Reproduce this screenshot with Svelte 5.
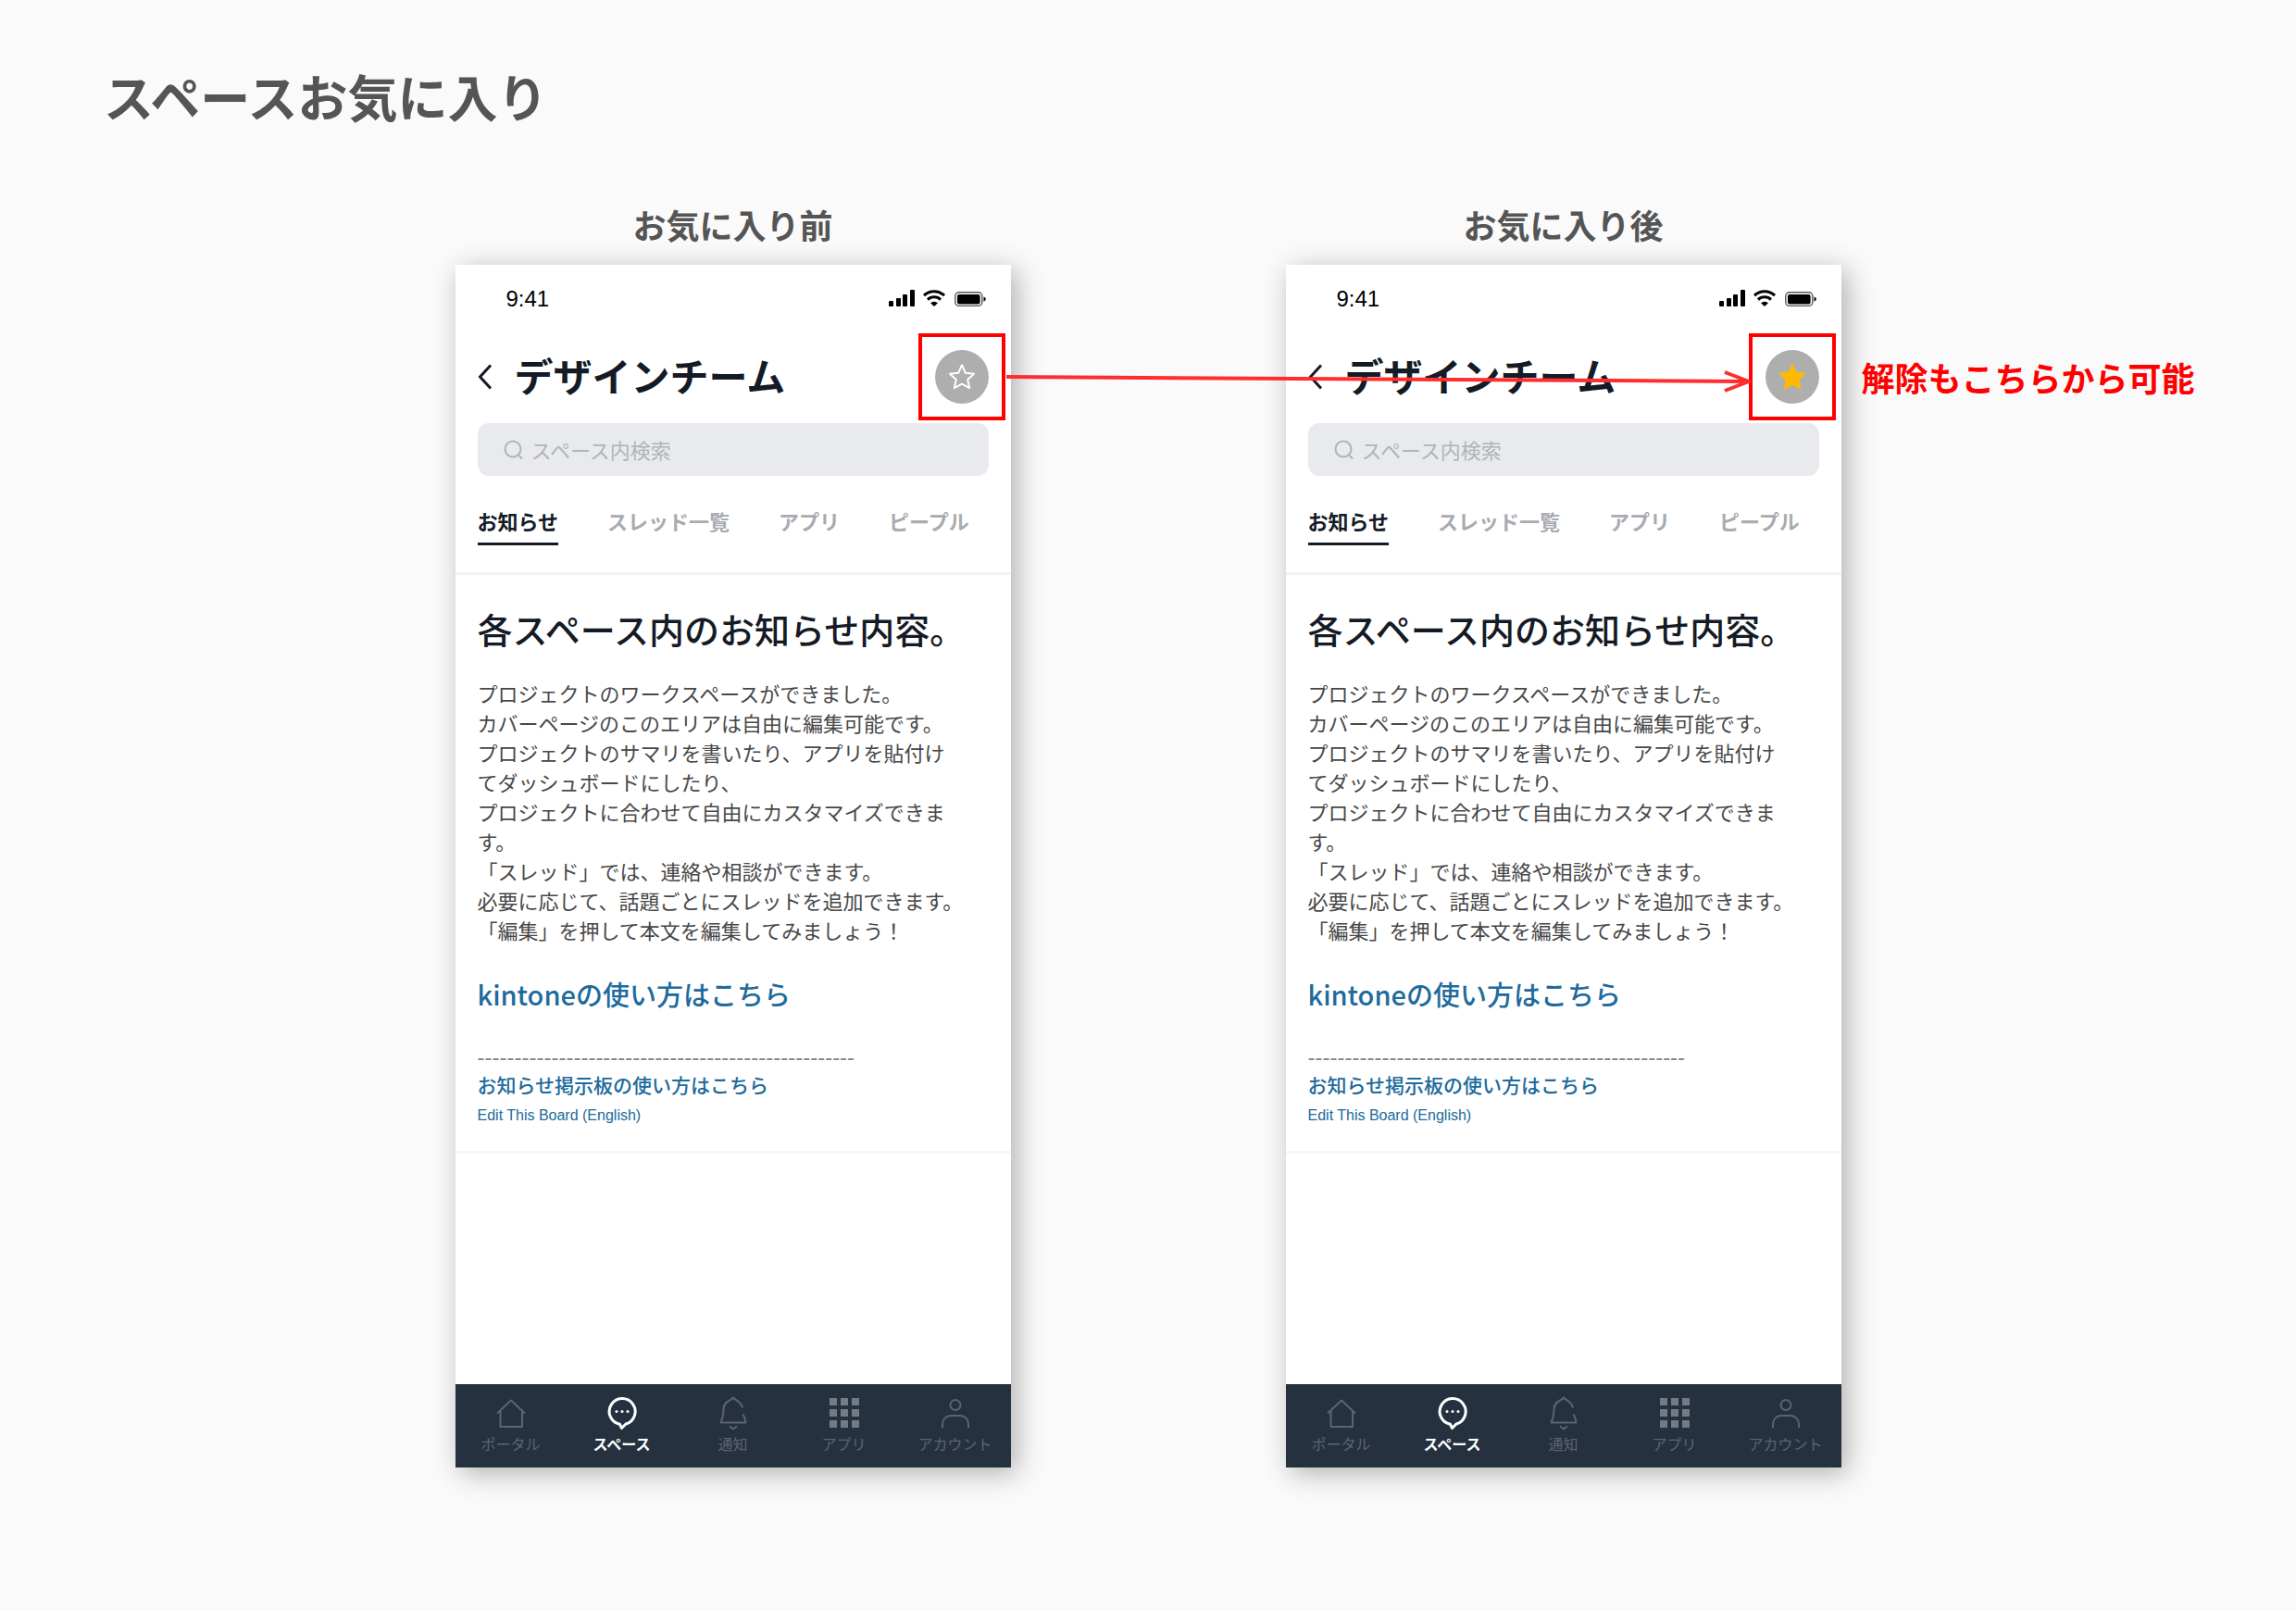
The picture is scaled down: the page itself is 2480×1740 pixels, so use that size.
<script>
  const phones = [
    { id: 'before', caption: 'お気に入り前', favorite: false },
    { id: 'after', caption: 'お気に入り後', favorite: true }
  ];
  const tabs = ['お知らせ', 'スレッド一覧', 'アプリ', 'ピープル'];
  const body = [
    'プロジェクトのワークスペースができました。',
    'カバーページのこのエリアは自由に編集可能です。',
    'プロジェクトのサマリを書いたり、アプリを貼付け',
    'てダッシュボードにしたり、',
    'プロジェクトに合わせて自由にカスタマイズできま',
    'す。',
    '「スレッド」では、連絡や相談ができます。',
    '必要に応じて、話題ごとにスレッドを追加できます。',
    '「編集」を押して本文を編集してみましょう！'
  ];
  const nav = [
    { icon: 'home', label: 'ポータル' },
    { icon: 'space', label: 'スペース', current: true },
    { icon: 'bell', label: '通知' },
    { icon: 'grid', label: 'アプリ' },
    { icon: 'user', label: 'アカウント' }
  ];
  const rule = '-'.repeat(51);
  const cells = [0, 12, 24];
</script>

<main>
  <h1>スペースお気に入り</h1>

  <div class="stage">
    <div class="pair">
      {#each phones as phone (phone.id)}
        <figure>
          <figcaption>{phone.caption}</figcaption>
          <article class="phone">
            <div class="status">
              <time>9:41</time>
              <svg width="106" height="20" viewBox="0 0 106 20" aria-hidden="true">
                <rect x="0" y="12" width="5" height="6" rx="1" />
                <rect x="8" y="9" width="5" height="9" rx="1" />
                <rect x="15" y="5" width="5" height="13" rx="1" />
                <rect x="23" y="0" width="5" height="18" rx="1" />
                <g fill="none" stroke="#000" stroke-width="3">
                  <path d="M38 6.2a16 16 0 0 1 22 0" />
                  <path d="M42 10.6a10 10 0 0 1 14 0" />
                </g>
                <path d="M45 14.2a6 6 0 0 1 8 0l-4 3.8z" />
                <rect x="71.8" y="2.8" width="29" height="14.6" rx="4" fill="none" stroke="#555" stroke-width="1.4" />
                <rect x="74" y="5" width="24.600" height="10.400" rx="2" />
                <path d="M102.500 7.500q2.400 0.800 2.400 2.600t-2.400 2.600z" />
              </svg>
            </div>

            <header>
              <button class="back" aria-label="戻る">
                <svg width="16" height="28" viewBox="0 0 16 28" aria-hidden="true"><path d="M14 1.500 2.500 14 14 26.500" /></svg>
              </button>
              <h2>デザインチーム</h2>
              <div class="mark">
                <button class="star" class:on={phone.favorite} aria-label="お気に入り" aria-pressed={phone.favorite}>
                  <svg width="30" height="30" viewBox="0 0 30 30" aria-hidden="true">
                    <path d="M15 2.200 18.800 10.800 28 11.800 21.200 18 23.200 27.200 15 22.600 6.800 27.200 8.800 18 2 11.800 11.200 10.800Z" />
                  </svg>
                </button>
              </div>
            </header>

            <label class="search">
              <svg width="22" height="22" viewBox="0 0 22 22" aria-hidden="true">
                <circle cx="10" cy="10" r="8.500" /><path d="m15.500 16 4.500 4.500" />
              </svg>
              <input type="search" placeholder="スペース内検索" aria-label="スペース内検索" />
            </label>

            <div class="tabs" role="tablist">
              {#each tabs as tab, i}
                <button role="tab" aria-selected={i === 0}>{tab}</button>
              {/each}
            </div>

            <section>
              <h3>各スペース内のお知らせ内容。</h3>
              <p class="text">{#each body as line}{line}<br />{/each}</p>
              <a class="guide" href="#guide">kintoneの使い方はこちら</a>
              <p class="rule">{rule}</p>
              <a class="board" href="#board">お知らせ掲示板の使い方はこちら</a>
              <a class="english" href="#edit">Edit This Board (English)</a>
            </section>

            <nav>
              {#each nav as item}
                <a href="#{item.icon}" class:current={item.current}>
                  <svg width="36" height="38" viewBox="0 0 36 38" aria-hidden="true">
                    {#if item.icon === 'home'}
                      <path d="M3 19.500 18 5.500 33 19.500M6.500 17V34H30V17" />
                    {:else if item.icon === 'space'}
                      <path stroke-width="3" d="M15.500 31.300A14 14 0 1 1 22 31L17.500 35.500Z" />
                      <g class="solid"><circle cx="12" cy="17.500" r="1.500" /><circle cx="18" cy="17.500" r="1.500" /><circle cx="24" cy="17.500" r="1.500" /></g>
                    {:else if item.icon === 'bell'}
                      <path d="M28 13.500c-1.500-7-7-7.500-10-11-3 3.500-10 4-10.500 12 0 7-0.500 10-3 15h27c-0.500-4-1.500-6.500-3-9M14 33.500 18 36.500l4-3" />
                    {:else if item.icon === 'grid'}
                      <g class="solid">
                        {#each cells as y}{#each cells as x}<rect x={x + 2} y={y + 3} width="8" height="8" />{/each}{/each}
                      </g>
                    {:else}
                      <circle cx="18" cy="10.500" r="5.500" /><path d="M4 35v-4a9 9 0 0 1 9-9h10a9 9 0 0 1 9 9v4" />
                    {/if}
                  </svg>
                  <span>{item.label}</span>
                </a>
              {/each}
            </nav>
          </article>
        </figure>
      {/each}

      <svg class="arrow" width="804" height="24" viewBox="0 0 804 24" aria-hidden="true">
        <path d="M0 7 801 12M776 2 802 12 776 22" />
      </svg>
      <p class="note">解除もこちらから可能</p>
    </div>
  </div>
</main>

<style>
  :global(body) {
    margin: 0;
    background: #fafafa;
  }
  main {
    min-height: 100vh;
    box-sizing: border-box;
    padding: 64px 112px;
    background: #fafafa;
    font-family: 'Noto Sans CJK JP', 'Noto Sans', sans-serif;
    color: #151b26;
  }
  h1, h2, h3, p, figure {
    margin: 0;
  }
  button, input {
    border: 0;
    padding: 0;
    background: none;
    font: inherit;
    color: inherit;
  }
  a {
    text-decoration: none;
  }
  svg {
    display: block;
    flex: none;
  }
  h1 {
    font-size: 54px;
    line-height: 80px;
    color: #555;
  }
  .stage {
    display: flex;
    justify-content: center;
    margin-top: 72px;
  }
  .pair {
    position: relative;
    display: flex;
    gap: 297px;
  }
  figure {
    flex: 0 1 600px;
    min-width: 600px;
  }
  figcaption {
    margin-bottom: 18px;
    font-size: 36px;
    font-weight: 700;
    line-height: 52px;
    text-align: center;
    color: #555;
  }
  .phone {
    display: flex;
    flex-direction: column;
    min-height: 1299px;
    background: #fff;
    box-shadow: 6px 6px 28px rgba(0, 0, 0, 0.3);
  }
  .status {
    display: flex;
    align-items: center;
    justify-content: space-between;
    height: 74px;
    padding: 0 26px 0 55px;
    color: #000;
  }
  time {
    font: 24px 'Liberation Sans', Arial, sans-serif;
  }
  header {
    display: flex;
    align-items: center;
    height: 94px;
    padding: 0 6px 0 24px;
  }
  .back {
    width: 16px;
  }
  .back path {
    fill: none;
    stroke: #151b26;
    stroke-width: 3;
  }
  h2 {
    flex: 1;
    padding: 0 0 4px 24px;
    font-size: 42px;
    line-height: 60px;
    white-space: nowrap;
  }
  .mark {
    box-sizing: border-box;
    display: grid;
    place-items: center;
    width: 94px;
    height: 94px;
    border: 4px solid #f00;
  }
  .star {
    display: grid;
    place-items: center;
    width: 58px;
    height: 58px;
    border-radius: 50%;
    background: #aeaeae;
  }
  .star path {
    fill: none;
    stroke: #fff;
    stroke-width: 2;
    stroke-linejoin: round;
  }
  .star.on path {
    fill: #ffba00;
    stroke: #ffba00;
  }
  .search {
    display: flex;
    align-items: center;
    gap: 8px;
    height: 57px;
    margin: 3px 24px 0;
    padding: 0 28px;
    border-radius: 12px;
    background: #e8eaed;
  }
  .search svg {
    fill: none;
    stroke: #b0b4b9;
    stroke-width: 2;
  }
  input {
    flex: 1;
    min-width: 0;
    padding-bottom: 2px;
    font-size: 22px;
    outline: none;
  }
  input::placeholder {
    color: #b0b4b9;
    opacity: 1;
  }
  .tabs {
    display: flex;
    gap: 53px;
    padding: 32px 24px 29px;
    border-bottom: 3px solid #f3f3f3;
  }
  .tabs button {
    padding-bottom: 8px;
    border-bottom: 3px solid transparent;
    font-size: 22px;
    font-weight: 700;
    line-height: 32px;
    white-space: nowrap;
    color: #a8abb0;
  }
  .tabs button[aria-selected='true'] {
    border-color: #151b26;
    color: #151b26;
  }
  section {
    display: flex;
    flex-direction: column;
    align-items: flex-start;
    padding: 30px 24px 22px;
    border-bottom: 3px solid #f6f6f6;
  }
  h3 {
    font-size: 38px;
    font-weight: 500;
    line-height: 56px;
    white-space: nowrap;
  }
  .text {
    margin-top: 25px;
    font-size: 22px;
    line-height: 32px;
    color: #484848;
  }
  .guide, .board, .english {
    color: #206a9c;
    font-weight: 500;
  }
  .guide {
    margin-top: 31px;
    font-size: 29px;
    line-height: 44px;
  }
  .rule {
    margin-top: 34px;
    font: 24px/26px 'Liberation Sans', Arial, sans-serif;
    color: #888;
  }
  .board {
    font-size: 21px;
    line-height: 32px;
  }
  .english {
    margin-top: 2px;
    font: 16px/32px 'Liberation Sans', Arial, sans-serif;
  }
  nav {
    display: grid;
    grid-template-columns: repeat(5, 1fr);
    height: 90px;
    margin-top: auto;
    background: #263140;
  }
  nav a {
    display: flex;
    flex-direction: column;
    align-items: center;
    padding-top: 12px;
    font-size: 16px;
    line-height: 24px;
    white-space: nowrap;
    color: #5c646f;
  }
  nav span {
    margin-top: 2px;
  }
  nav svg {
    fill: none;
    stroke: currentColor;
    stroke-width: 2;
    stroke-linejoin: round;
  }
  nav .solid {
    fill: #737b86;
    stroke: none;
  }
  nav .current {
    font-weight: 700;
    color: #fff;
  }
  nav .current .solid {
    fill: #fff;
  }
  .arrow {
    position: absolute;
    top: 184px;
    left: 595px;
    fill: none;
    stroke: #ff2d2d;
    stroke-width: 4;
  }
  .note {
    position: absolute;
    top: 165px;
    left: 100%;
    margin-left: 22px;
    font-size: 36px;
    font-weight: 700;
    line-height: 52px;
    white-space: nowrap;
    color: #f00;
  }
</style>
